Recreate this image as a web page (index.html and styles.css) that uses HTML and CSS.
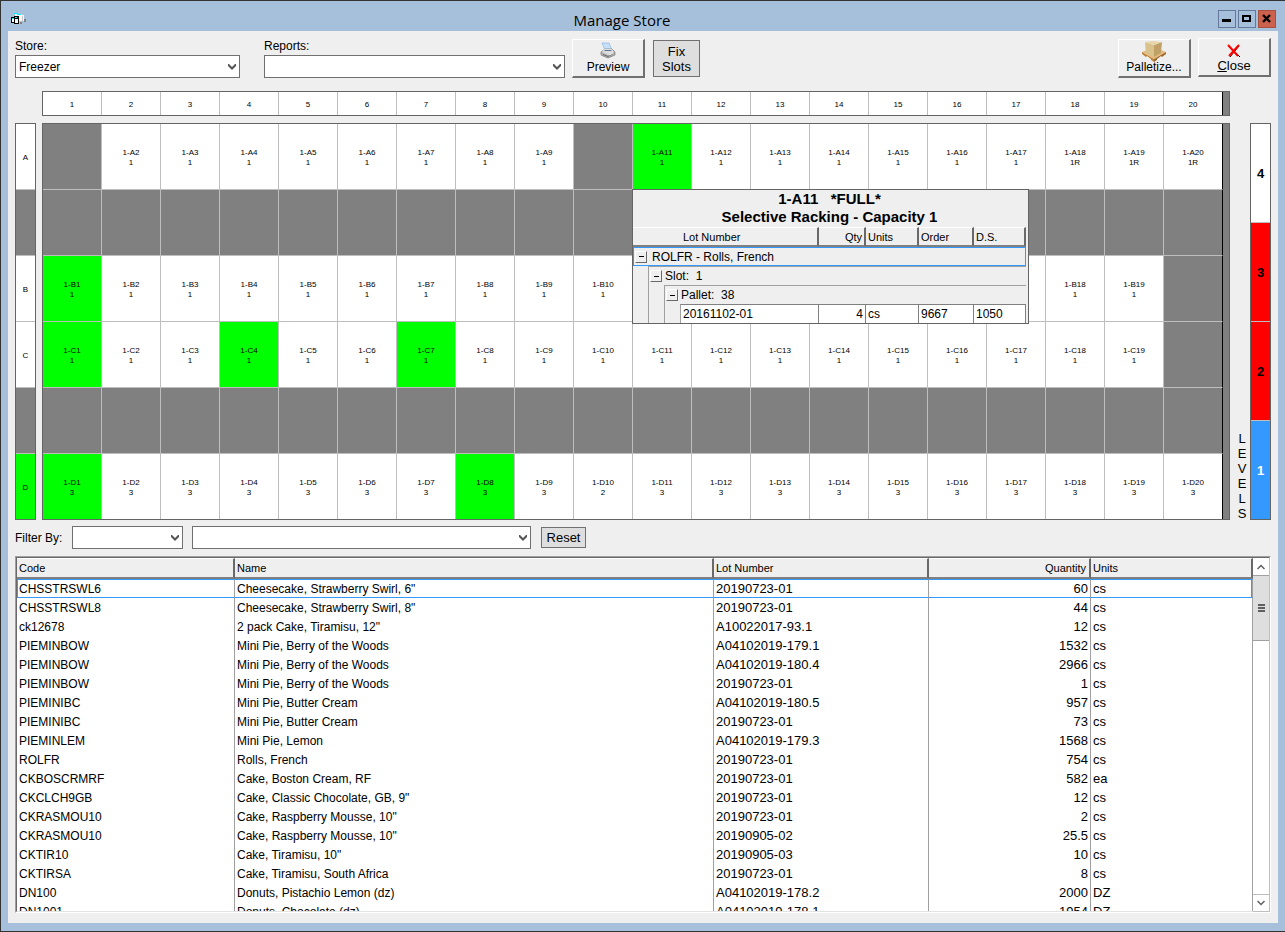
FILE: index.html
```html
<!DOCTYPE html>
<html lang="en">
<head>
<meta charset="utf-8">
<title>Manage Store</title>
<link rel="stylesheet" href="styles.css">
</head>
<body>
<div class="window">
  <header class="titlebar">
    <svg class="app-icon" width="16" height="14" viewBox="0 0 16 14" shape-rendering="crispEdges">
      <path d="M4 1h7v1h2v6h-4v2H4z" fill="#f4f4f4"/>
      <path d="M3 0h4v1h3v1H6V1H3z" fill="#00f0ff"/>
      <path d="M11 3h1v5h-2v2H8V8h3z" fill="#c8c8c8"/>
      <path d="M13 6h2v3h-2zM9 9h2v2H9z" fill="#808080"/>
      <path d="M0 4h3V3h5v8H3v-1H0z" fill="#000"/>
      <path d="M1 6h2v3H1zM4 6h3v4H4z" fill="#fff"/>
      <path d="M1 5h2v1H1zM4 4h2v1H4z" fill="#00f0ff"/>
    </svg>
    <h1 class="title">Manage Store</h1>
    <div class="window-controls">
      <button class="control" aria-label="Minimize"><svg width="16" height="16" viewBox="0 0 16 16"><path d="M3 8h9v3H3z"/></svg></button>
      <button class="control" aria-label="Maximize"><svg width="16" height="16" viewBox="0 0 16 16"><path fill-rule="evenodd" d="M3 4h9v7H3zM5 6v3h5V6z"/></svg></button>
      <button class="control control-close" aria-label="Close window"><svg width="16" height="16" viewBox="0 0 16 16"><path d="M4 4l7 7M11 4l-7 7" stroke="#000" stroke-width="2.4"/></svg></button>
    </div>
  </header>

  <main class="client">
    <div class="toolbar">
      <div class="field store-field">
        <label for="store">Store:</label>
        <div class="combo"><select id="store"><option>Freezer</option></select><svg class="chevron" width="8" height="6" viewBox="0 0 8 6"><path d="M0 0h1l3 3 3-3h1v2L4 6 0 2z"/></svg></div>
      </div>
      <div class="field reports-field">
        <label for="reports">Reports:</label>
        <div class="combo"><select id="reports"><option></option></select><svg class="chevron" width="8" height="6" viewBox="0 0 8 6"><path d="M0 0h1l3 3 3-3h1v2L4 6 0 2z"/></svg></div>
      </div>
      <button class="raised preview">
        <svg width="16" height="17" viewBox="0 0 16 17">
          <path d="M2 1h7l3 7H5z" fill="#c6e0fa" stroke="#7fabda" stroke-width=".6"/>
          <path d="M1 10l4-3h7l3 3v3l-7 3-7-3z" fill="#b4b4b4" stroke="#777" stroke-width=".7"/>
          <path d="M4 7h8l2 3-6 3-6-3z" fill="#dcdcdc"/>
          <path d="M4 8h7l1 1H5z" fill="#5e7894"/>
          <path d="M3 12l5 2 5-3v1l-5 3-5-2z" fill="#666"/>
          <path d="M9 13l4-2" stroke="#fff" stroke-width="1"/>
        </svg>
        <span>Preview</span>
      </button>
      <button class="flat fix">Fix<br>Slots</button>
      <div class="spacer"></div>
      <button class="raised palletize">
        <svg width="26" height="21" viewBox="0 0 26 21">
          <path d="M1 11l12-5 12 5-12 7z" fill="#e8bd7c"/>
          <path d="M1 11l12 7v3l-3-2v-1l-4-3-1 1-4-3z" fill="#c08438"/>
          <path d="M25 11l-12 7v3l3-2v-1l4-3 1 1 4-3z" fill="#a06a2c"/>
          <path d="M4 1l9 3v12l-8-3z" fill="#d9c28c"/>
          <path d="M13 4l8-3-1 11-7 4z" fill="#bfa066"/>
          <path d="M4 1l8-1 9 1-8 3z" fill="#e6d5a8"/>
        </svg>
        <span>Palletize...</span>
      </button>
      <button class="raised close">
        <svg width="16" height="14" viewBox="0 0 16 14">
          <path d="M3 2l11 11M13 2L4 13" stroke="#000" stroke-width="1"/>
          <path d="M2 1l10 11M13 1L3 12" stroke="#f00" stroke-width="2"/>
        </svg>
        <span><u>C</u>lose</span>
      </button>
    </div>

    <section class="map" aria-label="Rack map">
      <div class="frame columns">
        <div>1</div><div>2</div><div>3</div><div>4</div><div>5</div><div>6</div><div>7</div><div>8</div><div>9</div><div>10</div><div>11</div><div>12</div><div>13</div><div>14</div><div>15</div><div>16</div><div>17</div><div>18</div><div>19</div><div>20</div>
      </div>
      <div class="aisles">
        <div>A</div><div class="off"></div><div>B</div><div>C</div><div class="off"></div><div class="on">D</div>
      </div>
      <div class="frame slots">
        <div class="off"></div><div>1-A2<br>1</div><div>1-A3<br>1</div><div>1-A4<br>1</div><div>1-A5<br>1</div><div>1-A6<br>1</div><div>1-A7<br>1</div><div>1-A8<br>1</div><div>1-A9<br>1</div><div class="off"></div>
        <div class="on selected">1-A11<br>1
          <aside class="popup">
            <h2>1-A11 &nbsp; *FULL*<br>Selective Racking - Capacity 1</h2>
            <table class="detail">
              <colgroup><col class="indent-first"><col class="indent"><col class="indent"><col><col class="d-qty"><col class="d-units"><col class="d-order"><col class="d-ds"></colgroup>
              <thead><tr><th colspan="4" class="lot">Lot Number</th><th class="num">Qty</th><th>Units</th><th>Order</th><th>D.S.</th></tr></thead>
              <tbody>
                <tr><td colspan="8" class="group focus"><div class="node"><button class="expander" aria-label="Collapse item"></button><span class="product">ROLFR - Rolls, French</span></div></td></tr>
                <tr><td class="gutter"></td><td colspan="7" class="group"><div class="node"><button class="expander" aria-label="Collapse slot"></button>Slot: &nbsp;1</div></td></tr>
                <tr><td class="gutter"></td><td class="gutter"></td><td colspan="6" class="group"><div class="node"><button class="expander" aria-label="Collapse pallet"></button>Pallet: &nbsp;38</div></td></tr>
                <tr><td class="gutter"></td><td class="gutter"></td><td class="gutter"></td><td class="leaf">20161102-01</td><td class="leaf num">4</td><td class="leaf">cs</td><td class="leaf">9667</td><td class="leaf">1050</td></tr>
              </tbody>
            </table>
          </aside>
        </div>
        <div>1-A12<br>1</div><div>1-A13<br>1</div><div>1-A14<br>1</div><div>1-A15<br>1</div><div>1-A16<br>1</div><div>1-A17<br>1</div><div>1-A18<br>1R</div><div>1-A19<br>1R</div><div>1-A20<br>1R</div>

        <div class="off"></div><div class="off"></div><div class="off"></div><div class="off"></div><div class="off"></div><div class="off"></div><div class="off"></div><div class="off"></div><div class="off"></div><div class="off"></div><div class="off"></div><div class="off"></div><div class="off"></div><div class="off"></div><div class="off"></div><div class="off"></div><div class="off"></div><div class="off"></div><div class="off"></div><div class="off"></div>

        <div class="on">1-B1<br>1</div><div>1-B2<br>1</div><div>1-B3<br>1</div><div>1-B4<br>1</div><div>1-B5<br>1</div><div>1-B6<br>1</div><div>1-B7<br>1</div><div>1-B8<br>1</div><div>1-B9<br>1</div><div>1-B10<br>1</div><div></div><div></div><div></div><div></div><div></div><div></div><div></div><div>1-B18<br>1</div><div>1-B19<br>1</div><div class="off"></div>

        <div class="on">1-C1<br>1</div><div>1-C2<br>1</div><div>1-C3<br>1</div><div class="on">1-C4<br>1</div><div>1-C5<br>1</div><div>1-C6<br>1</div><div class="on">1-C7<br>1</div><div>1-C8<br>1</div><div>1-C9<br>1</div><div>1-C10<br>1</div><div>1-C11<br>1</div><div>1-C12<br>1</div><div>1-C13<br>1</div><div>1-C14<br>1</div><div>1-C15<br>1</div><div>1-C16<br>1</div><div>1-C17<br>1</div><div>1-C18<br>1</div><div>1-C19<br>1</div><div class="off"></div>

        <div class="off"></div><div class="off"></div><div class="off"></div><div class="off"></div><div class="off"></div><div class="off"></div><div class="off"></div><div class="off"></div><div class="off"></div><div class="off"></div><div class="off"></div><div class="off"></div><div class="off"></div><div class="off"></div><div class="off"></div><div class="off"></div><div class="off"></div><div class="off"></div><div class="off"></div><div class="off"></div>

        <div class="on">1-D1<br>3</div><div>1-D2<br>3</div><div>1-D3<br>3</div><div>1-D4<br>3</div><div>1-D5<br>3</div><div>1-D6<br>3</div><div>1-D7<br>3</div><div class="on">1-D8<br>3</div><div>1-D9<br>3</div><div>1-D10<br>2</div><div>1-D11<br>3</div><div>1-D12<br>3</div><div>1-D13<br>3</div><div>1-D14<br>3</div><div>1-D15<br>3</div><div>1-D16<br>3</div><div>1-D17<br>3</div><div>1-D18<br>3</div><div>1-D19<br>3</div><div>1-D20<br>3</div>
      </div>
      <div class="levels-label">L<br>E<br>V<br>E<br>L<br>S</div>
      <div class="levels">
        <div>4</div><div class="full">3</div><div class="full">2</div><div class="current">1</div>
      </div>
    </section>

    <div class="filter">
      <label for="filter-field">Filter By:</label>
      <div class="combo filter-field"><select id="filter-field"><option></option></select><svg class="chevron" width="8" height="6" viewBox="0 0 8 6"><path d="M0 0h1l3 3 3-3h1v2L4 6 0 2z"/></svg></div>
      <div class="combo filter-value"><select aria-label="Filter value"><option></option></select><svg class="chevron" width="8" height="6" viewBox="0 0 8 6"><path d="M0 0h1l3 3 3-3h1v2L4 6 0 2z"/></svg></div>
      <button class="flat reset">Reset</button>
    </div>

    <section class="listing">
      <div class="rows">
        <table class="stock">
          <colgroup><col class="c-code"><col><col class="c-lot"><col class="c-qty"><col class="c-units"></colgroup>
          <thead><tr><th>Code</th><th>Name</th><th>Lot Number</th><th class="num">Quantity</th><th>Units</th></tr></thead>
          <tbody>
            <tr class="focus"><td>CHSSTRSWL6</td><td>Cheesecake, Strawberry Swirl, 6"</td><td>20190723-01</td><td>60</td><td>cs</td></tr>
            <tr><td>CHSSTRSWL8</td><td>Cheesecake, Strawberry Swirl, 8"</td><td>20190723-01</td><td>44</td><td>cs</td></tr>
            <tr><td>ck12678</td><td>2 pack Cake, Tiramisu, 12"</td><td>A10022017-93.1</td><td>12</td><td>cs</td></tr>
            <tr><td>PIEMINBOW</td><td>Mini Pie, Berry of the Woods</td><td>A04102019-179.1</td><td>1532</td><td>cs</td></tr>
            <tr><td>PIEMINBOW</td><td>Mini Pie, Berry of the Woods</td><td>A04102019-180.4</td><td>2966</td><td>cs</td></tr>
            <tr><td>PIEMINBOW</td><td>Mini Pie, Berry of the Woods</td><td>20190723-01</td><td>1</td><td>cs</td></tr>
            <tr><td>PIEMINIBC</td><td>Mini Pie, Butter Cream</td><td>A04102019-180.5</td><td>957</td><td>cs</td></tr>
            <tr><td>PIEMINIBC</td><td>Mini Pie, Butter Cream</td><td>20190723-01</td><td>73</td><td>cs</td></tr>
            <tr><td>PIEMINLEM</td><td>Mini Pie, Lemon</td><td>A04102019-179.3</td><td>1568</td><td>cs</td></tr>
            <tr><td>ROLFR</td><td>Rolls, French</td><td>20190723-01</td><td>754</td><td>cs</td></tr>
            <tr><td>CKBOSCRMRF</td><td>Cake, Boston Cream, RF</td><td>20190723-01</td><td>582</td><td>ea</td></tr>
            <tr><td>CKCLCH9GB</td><td>Cake, Classic Chocolate, GB, 9"</td><td>20190723-01</td><td>12</td><td>cs</td></tr>
            <tr><td>CKRASMOU10</td><td>Cake, Raspberry Mousse, 10"</td><td>20190723-01</td><td>2</td><td>cs</td></tr>
            <tr><td>CKRASMOU10</td><td>Cake, Raspberry Mousse, 10"</td><td>20190905-02</td><td>25.5</td><td>cs</td></tr>
            <tr><td>CKTIR10</td><td>Cake, Tiramisu, 10"</td><td>20190905-03</td><td>10</td><td>cs</td></tr>
            <tr><td>CKTIRSA</td><td>Cake, Tiramisu, South Africa</td><td>20190723-01</td><td>8</td><td>cs</td></tr>
            <tr><td>DN100</td><td>Donuts, Pistachio Lemon (dz)</td><td>A04102019-178.2</td><td>2000</td><td>DZ</td></tr>
            <tr><td>DN1001</td><td>Donuts, Chocolate (dz)</td><td>A04102019-178.1</td><td>1954</td><td>DZ</td></tr>
          </tbody>
        </table>
      </div>
      <div class="scrollbar">
        <button class="arrow" aria-label="Scroll up"><svg width="8" height="6" viewBox="0 0 8 6"><path d="M.5 5L4 1.500 7.500 5" fill="none" stroke="#606060" stroke-width="1.500"/></svg></button>
        <div class="thumb"><i></i><i></i><i></i></div>
        <div class="spacer"></div>
        <button class="arrow arrow-down" aria-label="Scroll down"><svg width="8" height="6" viewBox="0 0 8 6"><path d="M.5 1L4 4.500 7.500 1" fill="none" stroke="#606060" stroke-width="1.500"/></svg></button>
      </div>
    </section>
  </main>
</div>
</body>
</html>
```
FILE: styles.css
```css
* {
  box-sizing: border-box;
}

body {
  margin: 0;
  background: #fff;
  color: #000;
  font: 12px/16px "Liberation Sans", Arial, sans-serif;
}

button,
select {
  margin: 0;
  padding: 0;
  border: 0;
  border-radius: 0;
  color: inherit;
  font: inherit;
}

.window {
  display: flex;
  flex-direction: column;
  height: 100vh;
  min-height: 640px;
  padding: 0 7px 8px;
  border: 1px solid #333;
  border-right: 0;
  background: #a6c0dc;
}

.titlebar {
  display: grid;
  grid-template-columns: 1fr auto 1fr;
  align-items: center;
  height: 30px;
  flex: none;
}

.app-icon {
  margin: 7px 0 0 3px;
}

.title {
  margin: 7px 0 0;
  padding-right: 42px;
  font: 15px/20px "Open Sans", "Noto Sans", sans-serif;
}

.window-controls {
  display: flex;
  justify-content: flex-end;
  gap: 2px;
  padding: 6px 2px 0 0;
}

.control {
  width: 18px;
  height: 18px;
  border: 1px solid #64789a;
  background: #a6c0dc;
}

.control svg {
  display: block;
}

.control-close {
  border-color: #a8503c;
  background: #cc624e;
}

.client {
  display: flex;
  flex-direction: column;
  flex: 1;
  min-height: 0;
  padding: 7px 7px 10px;
  background: #efefef;
}

.toolbar {
  display: flex;
  align-items: flex-start;
  height: 53px;
  flex: none;
}

.field label {
  display: block;
  height: 17px;
}

.store-field {
  width: 225px;
  margin-right: 24px;
}

.reports-field {
  width: 301px;
  margin-right: 7px;
}

.combo {
  display: grid;
}

.combo select {
  grid-area: 1 / 1;
  width: 100%;
  height: 23px;
  padding: 0 20px 0 3px;
  appearance: none;
  border: 1px solid #707070;
  background: #fff;
}

.chevron {
  grid-area: 1 / 1;
  place-self: center end;
  margin-right: 4px;
  fill: #555;
  pointer-events: none;
}

.spacer {
  flex: 1;
}

.raised {
  display: flex;
  flex-direction: column;
  align-items: center;
  justify-content: flex-end;
  width: 73px;
  height: 39px;
  padding-bottom: 1px;
  border: solid;
  border-width: 1px 2px 2px 1px;
  border-color: #fff #707070 #707070 #fff;
  background: #efefef;
}

.raised svg {
  flex: none;
}

.flat,
.close {
  font-size: 13px;
}

.flat {
  border: 1px solid #707070;
  background: #dedede;
}

.preview {
  margin: 1px 8px 0 0;
}

.fix {
  width: 47px;
  height: 37px;
  margin-top: 2px;
  line-height: 15px;
}

.palletize {
  margin: 1px 7px 0 0;
}

.palletize svg {
  margin-bottom: -3px;
}

.map {
  display: grid;
  grid-template-columns: 21px 1fr 20px 21px;
  row-gap: 7px;
  flex: none;
  font-size: 8px;
  line-height: 10px;
  text-align: center;
}

.frame {
  display: grid;
  grid-template-columns: repeat(20, minmax(0, 1fr));
  margin-left: 6px;
  padding-right: 6px;
  border: 1px solid #646464;
  background: #808080;
}

.frame > div,
.aisles > div {
  display: grid;
  place-content: center;
  padding-top: 2px;
  border-bottom: 1px solid #bebebe;
  background: #fff;
}

.frame > div {
  border-right: 1px solid #bebebe;
}

.frame > div:nth-child(20n) {
  border-right-color: #000;
}

.columns {
  grid-column: 2;
  height: 25px;
}

.columns > div {
  border-bottom: 0;
}

.aisles,
.slots {
  grid-row: 2;
  grid-template-rows: repeat(5, 66px) 65px;
}

.aisles {
  display: grid;
  grid-column: 1;
  border: 1px solid #646464;
}

.slots {
  grid-column: 2;
}

.aisles > div:last-child,
.slots > div:nth-child(n + 101) {
  border-bottom: 0;
}

.map .off {
  background: #808080;
}

.map .on {
  background: #0f0;
}

.selected {
  position: relative;
}

.levels-label {
  grid-area: 2 / 3;
  align-self: end;
  margin-bottom: -1px;
  padding-left: 4px;
  font-size: 13px;
  line-height: 15px;
}

.levels {
  display: grid;
  grid-area: 2 / 4;
  grid-template-rows: repeat(3, 99px) 1fr;
  border: 1px solid #646464;
  font-size: 13px;
  font-weight: bold;
}

.levels > div {
  display: grid;
  place-content: center;
  padding-top: 2px;
  border-bottom: 1px solid #bebebe;
  background: #fff;
}

.levels > div:last-child {
  border-bottom: 0;
}

.levels .full {
  background: #f00;
}

.levels .current {
  background: #39f;
  color: #fff;
}

/* Slot detail card, anchored below its slot */
.popup {
  position: absolute;
  top: 100%;
  left: -1px;
  z-index: 1;
  padding-right: 2px;
  border: 1px solid #646464;
  background: #efefef;
  font-size: 12px;
  line-height: 16px;
  text-align: left;
}

.popup h2 {
  margin: 0;
  padding-bottom: 1px;
  font-size: 15px;
  line-height: 18px;
  text-align: center;
}

.detail {
  width: 393px;
  table-layout: fixed;
  border-collapse: separate;
  border-spacing: 0;
}

.indent-first {
  width: 15px;
}

.indent {
  width: 16px;
}

.d-qty {
  width: 47px;
}

.d-units {
  width: 53px;
}

.d-order {
  width: 55px;
}

.d-ds {
  width: 52px;
}

th,
td {
  padding: 0 2px;
  text-align: left;
  white-space: nowrap;
}

th {
  border: solid;
  border-width: 1px 2px 2px 0;
  border-color: #fff #696969 #808080;
  background: #efefef;
  font-size: 11px;
  font-weight: normal;
}

.detail th {
  height: 20px;
}

.detail .lot {
  padding-left: 50px;
}

.detail td {
  height: 19px;
}

.detail td.group {
  padding: 0 1px;
  border-top: 1px solid #a0a0a0;
  border-left: 1px solid #a0a0a0;
}

.detail td.focus {
  border: 1px solid #39f;
}

.detail td.leaf {
  border: solid #808080;
  border-width: 1px 1px 0 0;
  background: #fff;
}

.detail td.gutter {
  border: 0;
}

.detail td.gutter + .gutter,
.detail td.gutter + .leaf {
  border-left: 1px solid #a0a0a0;
}

.node {
  display: flex;
  align-items: center;
  gap: 3px;
}

.product {
  padding-left: 2px;
}

.expander {
  display: grid;
  place-content: center;
  width: 12px;
  height: 12px;
  border: 1px solid #fff;
  border-color: #fff #696969 #696969 #fff;
  background: #efefef;
}

.expander::before {
  content: "";
  width: 5px;
  height: 1px;
  background: #000;
}

.num,
.stock td:nth-child(4) {
  text-align: right;
}

.filter {
  display: flex;
  align-items: center;
  height: 36px;
  padding-bottom: 1px;
  flex: none;
}

.filter label {
  width: 57px;
}

.filter-field {
  width: 111px;
  margin-right: 9px;
}

.filter-value {
  width: 339px;
  margin-right: 10px;
}

.reset {
  width: 45px;
  height: 21px;
}

.listing {
  display: flex;
  flex: 1;
  min-height: 0;
  border: 1px solid #a0a0a0;
  border-color: #a0a0a0 #fff #fff #a0a0a0;
  background: #fff;
}

.rows {
  flex: 1;
  overflow: hidden;
  border: solid #696969;
  border-width: 1px 0 0 1px;
  border-bottom: 1px solid #e3e3e3;
}

.stock {
  width: 100%;
  table-layout: fixed;
  border-spacing: 0;
}

.c-code {
  width: 218px;
}

.c-lot {
  width: 215px;
}

.c-qty,
.c-units {
  width: 162px;
}

.stock th {
  height: 21px;
}

.stock th.num {
  padding-right: 3px;
}

.stock td {
  height: 19px;
  border-right: 1px solid #a0a0a0;
}

.stock td:nth-child(n + 3) {
  font-size: 13px;
}

.stock .focus td {
  border-top: 1px solid #39f;
  border-bottom: 1px solid #39f;
}

.stock .focus td:first-child {
  box-shadow: inset 1px 0 #39f;
}

.stock .focus td:last-child {
  box-shadow: inset -1px 0 #39f;
}

.scrollbar {
  display: flex;
  flex-direction: column;
  width: 17px;
  border: 1px solid #bebebe;
  border-top-color: #696969;
  border-left: 0;
}

.arrow {
  display: grid;
  place-content: center;
  height: 17px;
  background: #fff;
}

.arrow-down {
  border-top: 1px solid #bebebe;
}

.thumb {
  display: grid;
  place-content: center;
  gap: 1px;
  height: 66px;
  border: solid #a0a0a0;
  border-width: 1px 0;
  background: #dedede;
}

.thumb i {
  width: 7px;
  height: 2px;
  background: #606060;
}
```
